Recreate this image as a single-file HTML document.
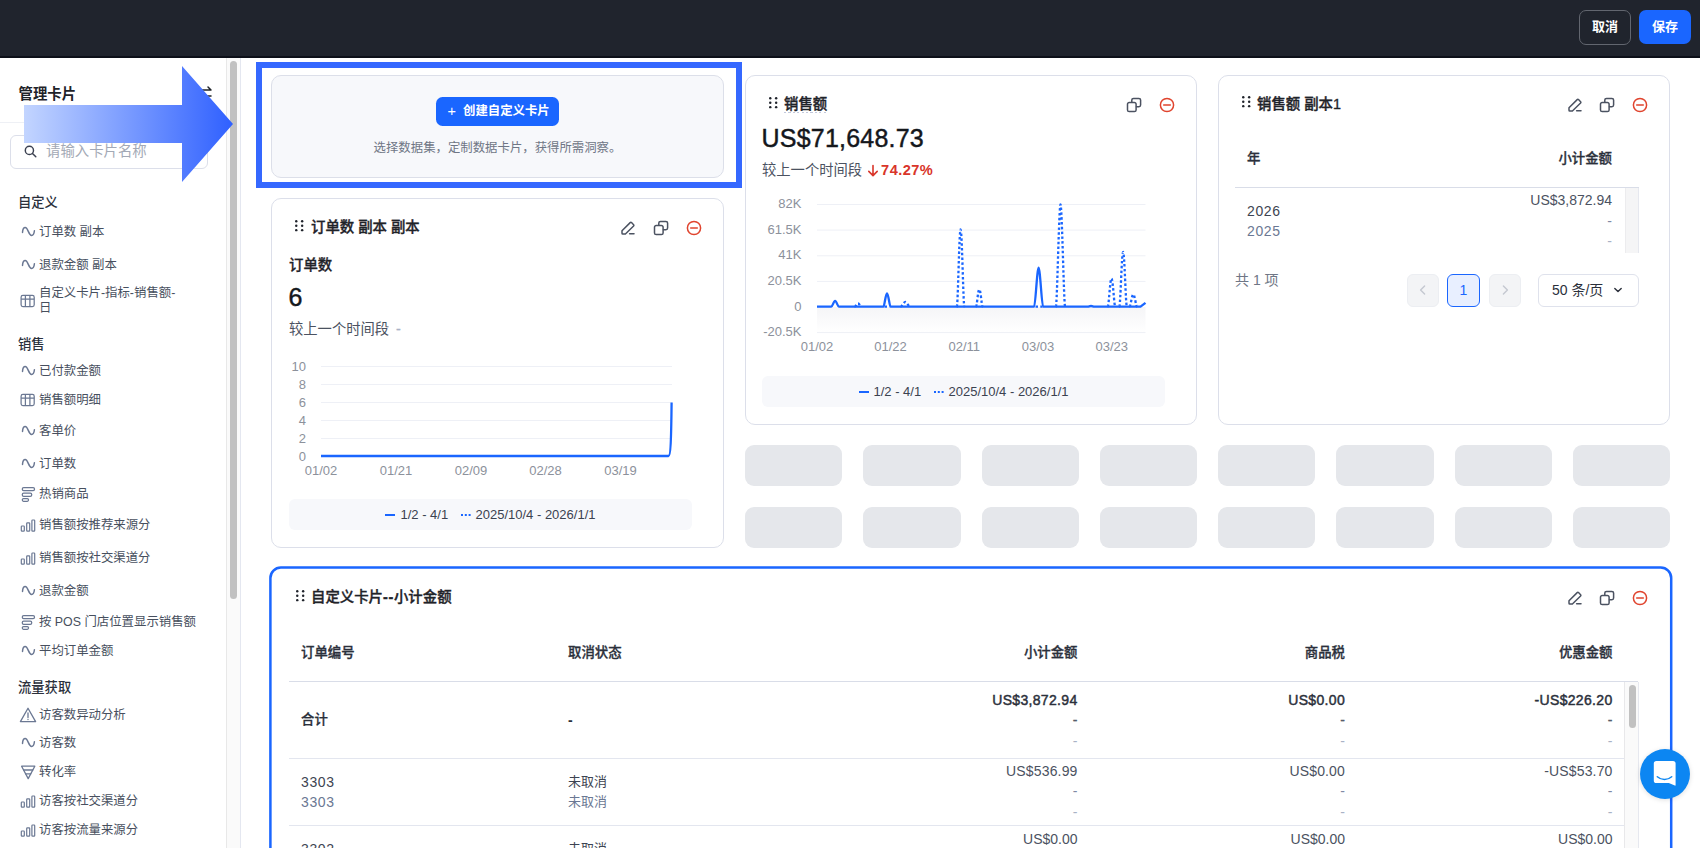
<!DOCTYPE html>
<html lang="zh-CN">
<head>
<meta charset="utf-8">
<title>管理卡片</title>
<style>
*{box-sizing:border-box;margin:0;padding:0}
html,body{width:1700px;height:852px;overflow:hidden;background:#fff}
body{font-family:"Liberation Sans","Noto Sans CJK SC",sans-serif;color:#1f2329;position:relative;font-size:12px}
.abs{position:absolute}
#top{position:absolute;left:0;top:0;width:1700px;height:58px;background:#20242d;border-bottom:2px solid #0d1019;z-index:5}
.btn{position:absolute;top:10px;height:35px;width:52px;border-radius:7px;color:#fff;font-size:13px;font-weight:700;text-align:center;line-height:33px}
#cancel{left:1579px;border:1.5px solid #62666f;line-height:32px}
#save{left:1639px;top:10px;height:34px;background:#1a66ff;line-height:34px}
/* sidebar */
#side{position:absolute;left:0;top:0;width:226px;height:848px;background:#fff}
.t{position:absolute;white-space:nowrap;line-height:16px;height:16px}
.sec{font-size:13.3px;font-weight:500;color:#2b303b;left:18px}
.it{font-size:12.4px;color:#474f5e;left:39px}
.ic{position:absolute;left:19px;width:18px;height:18px}
.ic svg{display:block}
/* cards */
.card{position:absolute;background:#fff;border:1px solid #dcdfea;border-radius:10px}
.ct{position:absolute;font-size:14.4px;font-weight:500;-webkit-text-stroke:0.35px #1f2329;color:#1f2329;white-space:nowrap;line-height:20px}
.g{color:#8a8f99}
.sk{position:absolute;width:97px;height:41px;border-radius:9px;background:#e5e7eb}
.ax{position:absolute;font-size:13px;color:#8c919b;white-space:nowrap;line-height:14px;height:14px}
.r{text-align:right}
.leg{position:absolute;background:#f7f8fb;border-radius:6px;height:31px}
.leg span{position:absolute;top:8px;font-size:13px;line-height:15px;color:#3b4250;white-space:nowrap}
.th{position:absolute;font-size:13.4px;font-weight:500;-webkit-text-stroke:0.3px #2b303b;color:#2b303b;white-space:nowrap;line-height:16px}
.td{position:absolute;font-size:14px;color:#3d4452;white-space:nowrap;line-height:16px}
.td2{position:absolute;font-size:14px;color:#6b7893;white-space:nowrap;line-height:16px}
.hl{position:absolute;height:1px;background:#e3e6ef}
.big{position:absolute;font-size:25px;font-weight:400;color:#14171c;line-height:30px;white-space:nowrap;-webkit-text-stroke:0.45px #14171c}
.num{letter-spacing:0.6px}
</style>
</head>
<body>
<div id="top">
  <div class="btn" id="cancel">取消</div>
  <div class="btn" id="save">保存</div>
</div>
<div id="side">
<div class="t" style="left:18.5px;top:85px;font-size:14.4px;font-weight:700;color:#1f2329;line-height:18px;height:18px">管理卡片</div>
<svg class="abs" style="left:196px;top:84px" width="18" height="18" viewBox="0 0 18 18" fill="none" stroke="#1f2329" stroke-width="1.5" stroke-linecap="round" stroke-linejoin="round"><path d="M3 6h12M12 3l3 3M15 12H3M6 15l-3-3"/></svg>
<div class="hl" style="left:0;top:122px;width:226px;background:#eef0f5"></div>
<div class="abs" style="left:10px;top:135px;width:198px;height:34px;border:1px solid #dcdfea;border-radius:6px"></div>
<svg class="abs" style="left:23px;top:144px" width="16" height="16" viewBox="0 0 16 16" fill="none" stroke="#3b4150" stroke-width="1.45" stroke-linecap="round"><circle cx="6.4" cy="6.4" r="4.1"/><path d="M9.5 9.5L12.8 12.8"/></svg>
<div class="t" style="left:46px;top:142px;font-size:14.4px;color:#a3a9b5;line-height:18px;height:18px">请输入卡片名称</div>
<div class="t sec" style="top:195px">自定义</div>
<div class="ic" style="top:223px"><svg width="18" height="18" viewBox="0 0 18 18" fill="none" stroke="#6b7893" stroke-width="1.5" stroke-linecap="round"><path d="M3.5 9.4C3.8 6 4.8 4.6 6.2 4.6c3 0 3.2 7.8 6.4 7.8 1.5 0 2.5-1.6 2.8-4.6"/></svg></div><div class="t it" style="top:224.4px">订单数 副本</div>
<div class="ic" style="top:255.5px"><svg width="18" height="18" viewBox="0 0 18 18" fill="none" stroke="#6b7893" stroke-width="1.5" stroke-linecap="round"><path d="M3.5 9.4C3.8 6 4.8 4.6 6.2 4.6c3 0 3.2 7.8 6.4 7.8 1.5 0 2.5-1.6 2.8-4.6"/></svg></div><div class="t it" style="top:256.9px">退款金额 副本</div>
<div class="ic" style="top:292px"><svg width="18" height="18" viewBox="0 0 18 18" fill="none" stroke="#6b7893" stroke-width="1.25"><rect x="2.1" y="3.35" width="13.1" height="11.3" rx="1.8"/><path d="M2.1 7.05h13.1M6.4 3.35v11.3M10.9 3.35v11.3"/></svg></div><div class="t it" style="top:286.3px;height:30px;line-height:15px">自定义卡片-指标-销售额-<br>日</div>
<div class="t sec" style="top:337px">销售</div>
<div class="ic" style="top:361.5px"><svg width="18" height="18" viewBox="0 0 18 18" fill="none" stroke="#6b7893" stroke-width="1.5" stroke-linecap="round"><path d="M3.5 9.4C3.8 6 4.8 4.6 6.2 4.6c3 0 3.2 7.8 6.4 7.8 1.5 0 2.5-1.6 2.8-4.6"/></svg></div><div class="t it" style="top:362.9px">已付款金额</div>
<div class="ic" style="top:390.5px"><svg width="18" height="18" viewBox="0 0 18 18" fill="none" stroke="#6b7893" stroke-width="1.25"><rect x="2.1" y="3.35" width="13.1" height="11.3" rx="1.8"/><path d="M2.1 7.05h13.1M6.4 3.35v11.3M10.9 3.35v11.3"/></svg></div><div class="t it" style="top:391.9px">销售额明细</div>
<div class="ic" style="top:422px"><svg width="18" height="18" viewBox="0 0 18 18" fill="none" stroke="#6b7893" stroke-width="1.5" stroke-linecap="round"><path d="M3.5 9.4C3.8 6 4.8 4.6 6.2 4.6c3 0 3.2 7.8 6.4 7.8 1.5 0 2.5-1.6 2.8-4.6"/></svg></div><div class="t it" style="top:423.4px">客单价</div>
<div class="ic" style="top:454.5px"><svg width="18" height="18" viewBox="0 0 18 18" fill="none" stroke="#6b7893" stroke-width="1.5" stroke-linecap="round"><path d="M3.5 9.4C3.8 6 4.8 4.6 6.2 4.6c3 0 3.2 7.8 6.4 7.8 1.5 0 2.5-1.6 2.8-4.6"/></svg></div><div class="t it" style="top:455.9px">订单数</div>
<div class="ic" style="top:485px"><svg width="18" height="18" viewBox="0 0 18 18" fill="none" stroke="#6b7893" stroke-width="1.25"><rect x="3.3" y="2.6" width="12.2" height="3.1" rx="1.4"/><rect x="3.3" y="8.2" width="9.4" height="3.1" rx="1.4"/><rect x="3.3" y="13.6" width="6.2" height="2.7" rx="1.2"/></svg></div><div class="t it" style="top:486.4px">热销商品</div>
<div class="ic" style="top:516px"><svg width="18" height="18" viewBox="0 0 18 18" fill="none" stroke="#6b7893" stroke-width="1.2"><rect x="2.3" y="10" width="3" height="5.2" rx="0.7"/><rect x="7.7" y="6.9" width="3" height="8.3" rx="0.7"/><rect x="12.9" y="4" width="2.8" height="11.2" rx="0.7"/></svg></div><div class="t it" style="top:517.4px">销售额按推荐来源分</div>
<div class="ic" style="top:549px"><svg width="18" height="18" viewBox="0 0 18 18" fill="none" stroke="#6b7893" stroke-width="1.2"><rect x="2.3" y="10" width="3" height="5.2" rx="0.7"/><rect x="7.7" y="6.9" width="3" height="8.3" rx="0.7"/><rect x="12.9" y="4" width="2.8" height="11.2" rx="0.7"/></svg></div><div class="t it" style="top:550.4px">销售额按社交渠道分</div>
<div class="ic" style="top:582px"><svg width="18" height="18" viewBox="0 0 18 18" fill="none" stroke="#6b7893" stroke-width="1.5" stroke-linecap="round"><path d="M3.5 9.4C3.8 6 4.8 4.6 6.2 4.6c3 0 3.2 7.8 6.4 7.8 1.5 0 2.5-1.6 2.8-4.6"/></svg></div><div class="t it" style="top:583.4px">退款金额</div>
<div class="ic" style="top:613px"><svg width="18" height="18" viewBox="0 0 18 18" fill="none" stroke="#6b7893" stroke-width="1.25"><rect x="3.3" y="2.6" width="12.2" height="3.1" rx="1.4"/><rect x="3.3" y="8.2" width="9.4" height="3.1" rx="1.4"/><rect x="3.3" y="13.6" width="6.2" height="2.7" rx="1.2"/></svg></div><div class="t it" style="top:614.4px">按 POS 门店位置显示销售额</div>
<div class="ic" style="top:641.5px"><svg width="18" height="18" viewBox="0 0 18 18" fill="none" stroke="#6b7893" stroke-width="1.5" stroke-linecap="round"><path d="M3.5 9.4C3.8 6 4.8 4.6 6.2 4.6c3 0 3.2 7.8 6.4 7.8 1.5 0 2.5-1.6 2.8-4.6"/></svg></div><div class="t it" style="top:642.9px">平均订单金额</div>
<div class="t sec" style="top:680px">流量获取</div>
<div class="ic" style="top:705.5px"><svg width="18" height="18" viewBox="0 0 18 18" fill="none" stroke="#6b7893" stroke-width="1.3" stroke-linejoin="round" stroke-linecap="round"><path d="M9 2.2L16.6 15.6H1.4Z"/><path d="M9 7v4.6M9 13.4v.2"/></svg></div><div class="t it" style="top:706.9px">访客数异动分析</div>
<div class="ic" style="top:734px"><svg width="18" height="18" viewBox="0 0 18 18" fill="none" stroke="#6b7893" stroke-width="1.5" stroke-linecap="round"><path d="M3.5 9.4C3.8 6 4.8 4.6 6.2 4.6c3 0 3.2 7.8 6.4 7.8 1.5 0 2.5-1.6 2.8-4.6"/></svg></div><div class="t it" style="top:735.4px">访客数</div>
<div class="ic" style="top:763px"><svg width="18" height="18" viewBox="0 0 18 18" fill="none" stroke="#6b7893" stroke-width="1.3" stroke-linejoin="round" stroke-linecap="round"><path d="M2.6 3.2h13.2L9.2 15.6Z"/><path d="M4.6 7h9.2M6.6 10.8h5.2"/></svg></div><div class="t it" style="top:764.4px">转化率</div>
<div class="ic" style="top:792px"><svg width="18" height="18" viewBox="0 0 18 18" fill="none" stroke="#6b7893" stroke-width="1.2"><rect x="2.3" y="10" width="3" height="5.2" rx="0.7"/><rect x="7.7" y="6.9" width="3" height="8.3" rx="0.7"/><rect x="12.9" y="4" width="2.8" height="11.2" rx="0.7"/></svg></div><div class="t it" style="top:793.4px">访客按社交渠道分</div>
<div class="ic" style="top:821px"><svg width="18" height="18" viewBox="0 0 18 18" fill="none" stroke="#6b7893" stroke-width="1.2"><rect x="2.3" y="10" width="3" height="5.2" rx="0.7"/><rect x="7.7" y="6.9" width="3" height="8.3" rx="0.7"/><rect x="12.9" y="4" width="2.8" height="11.2" rx="0.7"/></svg></div><div class="t it" style="top:822.4px">访客按流量来源分</div>
</div>
<!-- sidebar scrollbar -->
<div class="abs" style="left:226px;top:57px;width:15px;height:791px;background:#fafafa;border-left:1px solid #e8e8e8;border-right:1px solid #e4e7f0"></div>
<div class="abs" style="left:230px;top:61px;width:7px;height:538px;border-radius:4px;background:#c1c1c1"></div>
<!-- arrow annotation -->
<svg class="abs" style="left:20px;top:60px;z-index:4" width="220" height="130" viewBox="20 60 220 130">
<defs><linearGradient id="ag" x1="24" y1="0" x2="233" y2="0" gradientUnits="userSpaceOnUse"><stop offset="0" stop-color="#c3d5ff"/><stop offset="1" stop-color="#2f60ff"/></linearGradient></defs>
<path d="M24 105H182V66L233 124L182 182V143H24Z" fill="url(#ag)"/>
</svg>
<div id="main">
<!-- create card -->
<div class="card" style="left:271px;top:75px;width:453px;height:103px;background:#f7f8fb;border-color:#dcdfe9"></div>
<div class="abs" style="left:436px;top:97px;width:123px;height:29px;border-radius:6.5px;background:#1a66ff"></div>
<div class="abs" style="left:447.5px;top:101px;width:10px;color:#fff;font-size:14.5px;line-height:20px;white-space:nowrap">+</div>
<div class="abs" style="left:463px;top:101px;color:#fff;font-size:12.4px;font-weight:700;line-height:20px;white-space:nowrap">创建自定义卡片</div>
<div class="t" style="left:271px;width:453px;top:139.5px;text-align:center;font-size:12.4px;color:#6f7685">选择数据集，定制数据卡片，获得所需洞察。</div>
<!-- highlight -->
<div class="abs" style="left:256px;top:62px;width:486px;height:126px;border:6px solid #3568ff"></div>

<!-- card: 订单数 副本 副本 -->
<div class="card" style="left:271px;top:198px;width:453px;height:350px"></div>
<!-- card: 销售额 -->
<div class="card" style="left:745px;top:75px;width:452px;height:350px"></div>
<!-- card: 销售额 副本1 -->
<div class="card" style="left:1218px;top:75px;width:452px;height:350px"></div>
<!-- bottom card -->
<svg class="abs" style="left:265px;top:562px" width="1412" height="290" viewBox="265 562 1412 290"><rect x="270.4" y="567.5" width="1400.8" height="320" rx="10.5" fill="#fff" stroke="#1a66ff" stroke-width="2.5"/></svg>
<!-- skeletons -->
<div class="sk" style="left:745.00px;top:445px;width:97.25px"></div>
<div class="sk" style="left:863.25px;top:445px;width:97.25px"></div>
<div class="sk" style="left:981.50px;top:445px;width:97.25px"></div>
<div class="sk" style="left:1099.75px;top:445px;width:97.25px"></div>
<div class="sk" style="left:1218.00px;top:445px;width:97.25px"></div>
<div class="sk" style="left:1336.25px;top:445px;width:97.25px"></div>
<div class="sk" style="left:1454.50px;top:445px;width:97.25px"></div>
<div class="sk" style="left:1572.75px;top:445px;width:97.25px"></div>
<div class="sk" style="left:745.00px;top:507px;width:97.25px"></div>
<div class="sk" style="left:863.25px;top:507px;width:97.25px"></div>
<div class="sk" style="left:981.50px;top:507px;width:97.25px"></div>
<div class="sk" style="left:1099.75px;top:507px;width:97.25px"></div>
<div class="sk" style="left:1218.00px;top:507px;width:97.25px"></div>
<div class="sk" style="left:1336.25px;top:507px;width:97.25px"></div>
<div class="sk" style="left:1454.50px;top:507px;width:97.25px"></div>
<div class="sk" style="left:1572.75px;top:507px;width:97.25px"></div>
<!-- card 2 content -->
<svg class="abs" style="left:295.4px;top:220.2px" width="9" height="12" viewBox="0 0 9 12" fill="#1f232b"><circle cx="1.25" cy="1.25" r="1.22"/><circle cx="7.15" cy="1.25" r="1.22"/><circle cx="1.25" cy="5.70" r="1.22"/><circle cx="7.15" cy="5.70" r="1.22"/><circle cx="1.25" cy="10.15" r="1.22"/><circle cx="7.15" cy="10.15" r="1.22"/></svg>
<div class="ct" style="left:311px;top:217px">订单数 副本 副本</div>
<svg class="abs" style="left:619px;top:219px" width="18" height="18" viewBox="-9 -9 18 18" fill="none" stroke="#4b5261" stroke-width="1.5" stroke-linecap="round" stroke-linejoin="round"><path d="M2.2 -5.4a0.9 0.9 0 0 1 1.3 0L5.6 -3.3a0.9 0.9 0 0 1 0 1.3L-2.6 6H-5.2a0.8 0.8 0 0 1 -0.8 -0.8V2.8Z"/><path d="M1.6 5.8H6"/></svg>
<svg class="abs" style="left:651.5px;top:219px" width="18" height="18" viewBox="-9 -9 18 18" fill="none" stroke="#4b5261" stroke-width="1.5" stroke-linecap="round" stroke-linejoin="round"><rect x="-6.5" y="-2.4" width="8.6" height="9" rx="1.7"/><path d="M-2.2 -2.8V-4.9a1.7 1.7 0 0 1 1.7 -1.7h5.4a1.7 1.7 0 0 1 1.7 1.7v5a1.7 1.7 0 0 1 -1.7 1.7H2.5"/></svg>
<svg class="abs" style="left:684.5px;top:219px" width="18" height="18" viewBox="-9 -9 18 18" fill="none" stroke="#e0442e" stroke-width="1.5" stroke-linecap="round" stroke-linejoin="round"><circle cx="0" cy="0" r="6.6"/><path d="M-3.3 0h6.6"/></svg>
<div class="abs" style="left:289px;top:255px;font-size:14.4px;font-weight:500;-webkit-text-stroke:0.3px #1f2329;color:#1f2329;line-height:20px;white-space:nowrap">订单数</div>
<div class="big" style="left:288.5px;top:282px">6</div>
<div class="abs" style="left:289px;top:319px;font-size:14.3px;color:#4b5261;line-height:20px;white-space:nowrap">较上一个时间段 <span style="color:#a9b2c6;margin-left:3px;-webkit-text-stroke:0.3px #a9b2c6">-</span></div>
<svg class="abs" style="left:280px;top:355px" width="420" height="130" viewBox="280 355 420 130"><path d="M321 366.5H672" stroke="#eef0f6" stroke-width="1"/><path d="M321 384.5H672" stroke="#eef0f6" stroke-width="1"/><path d="M321 402.5H672" stroke="#eef0f6" stroke-width="1"/><path d="M321 420.5H672" stroke="#eef0f6" stroke-width="1"/><path d="M321 438.5H672" stroke="#eef0f6" stroke-width="1"/><path d="M321 456H668.5C670.5 456 671.2 440 671.6 402.5" fill="none" stroke="#1a66ff" stroke-width="2.3" stroke-linejoin="round"/><text x="306" y="370.6" text-anchor="end" font-size="13" fill="#8c919b">10</text><text x="306" y="388.6" text-anchor="end" font-size="13" fill="#8c919b">8</text><text x="306" y="406.6" text-anchor="end" font-size="13" fill="#8c919b">6</text><text x="306" y="424.6" text-anchor="end" font-size="13" fill="#8c919b">4</text><text x="306" y="442.6" text-anchor="end" font-size="13" fill="#8c919b">2</text><text x="306" y="460.6" text-anchor="end" font-size="13" fill="#8c919b">0</text><text x="321" y="475" text-anchor="middle" font-size="13" fill="#8c919b">01/02</text><text x="396" y="475" text-anchor="middle" font-size="13" fill="#8c919b">01/21</text><text x="471" y="475" text-anchor="middle" font-size="13" fill="#8c919b">02/09</text><text x="545.5" y="475" text-anchor="middle" font-size="13" fill="#8c919b">02/28</text><text x="620.5" y="475" text-anchor="middle" font-size="13" fill="#8c919b">03/19</text></svg>
<div class="leg" style="left:289px;top:498.5px;width:403px"><i class="abs" style="left:96px;top:15.5px;width:10px;height:2px;background:#1a66ff"></i><span style="left:111.5px">1/2 - 4/1</span><i class="abs" style="left:172px;top:15.5px;width:2.4px;height:2px;background:#1a66ff;box-shadow:3.8px 0 0 #1a66ff,7.6px 0 0 #1a66ff"></i><span style="left:186.5px">2025/10/4 - 2026/1/1</span></div>
<!-- card 3 content -->
<svg class="abs" style="left:768.8px;top:96.7px" width="9" height="12" viewBox="0 0 9 12" fill="#1f232b"><circle cx="1.25" cy="1.25" r="1.22"/><circle cx="7.15" cy="1.25" r="1.22"/><circle cx="1.25" cy="5.70" r="1.22"/><circle cx="7.15" cy="5.70" r="1.22"/><circle cx="1.25" cy="10.15" r="1.22"/><circle cx="7.15" cy="10.15" r="1.22"/></svg>
<div class="ct" style="left:784px;top:94px;line-height:17px;top:95.5px;padding-bottom:0;background:repeating-linear-gradient(90deg,#c3c9dc 0 2.2px,transparent 2.2px 4.4px) left 16.4px/100% 1px no-repeat;height:18px">销售额</div>
<svg class="abs" style="left:1125px;top:95.5px" width="18" height="18" viewBox="-9 -9 18 18" fill="none" stroke="#4b5261" stroke-width="1.5" stroke-linecap="round" stroke-linejoin="round"><rect x="-6.5" y="-2.4" width="8.6" height="9" rx="1.7"/><path d="M-2.2 -2.8V-4.9a1.7 1.7 0 0 1 1.7 -1.7h5.4a1.7 1.7 0 0 1 1.7 1.7v5a1.7 1.7 0 0 1 -1.7 1.7H2.5"/></svg>
<svg class="abs" style="left:1158px;top:95.5px" width="18" height="18" viewBox="-9 -9 18 18" fill="none" stroke="#e0442e" stroke-width="1.5" stroke-linecap="round" stroke-linejoin="round"><circle cx="0" cy="0" r="6.6"/><path d="M-3.3 0h6.6"/></svg>
<div class="big" style="left:761.5px;top:123px;letter-spacing:0.22px">US$71,648.73</div>
<div class="abs" style="left:762px;top:160px;font-size:14.3px;color:#4b5261;line-height:20px;white-space:nowrap">较上一个时间段<span style="color:#d9352a;font-weight:700;margin-left:5px;font-size:14.6px;letter-spacing:0.45px"><svg width="12" height="13" viewBox="0 0 12 13" style="vertical-align:-1.5px;margin-right:2px" fill="none" stroke="#d9352a" stroke-width="1.6" stroke-linecap="round" stroke-linejoin="round"><path d="M6 1.5v10M1.8 7.4L6 11.6l4.2-4.2"/></svg>74.27%</span></div>
<svg class="abs" style="left:755px;top:190px" width="420" height="170" viewBox="755 190 420 170"><defs><linearGradient id="ng" x1="0" y1="307" x2="0" y2="333" gradientUnits="userSpaceOnUse"><stop offset="0" stop-color="#f5f5f7"/><stop offset="1" stop-color="#ffffff"/></linearGradient></defs><rect x="817" y="307" width="328.5" height="26" fill="url(#ng)"/><path d="M817 204.5H1145.5" stroke="#eef0f6" stroke-width="1"/><path d="M817 230.1H1145.5" stroke="#eef0f6" stroke-width="1"/><path d="M817 255.8H1145.5" stroke="#eef0f6" stroke-width="1"/><path d="M817 281.4H1145.5" stroke="#eef0f6" stroke-width="1"/><path d="M817 332.6H1145.5" stroke="#eef0f6" stroke-width="1"/><path d="M854.6 306.7C855.8 306.7 856.5 303.5 858.0 303.5C859.5 303.5 860.2 306.7 861.4 306.7M900.6 306.7C901.8 306.7 903.8 302 905.3 302C906.8 302 908.8 306.7 910.0 306.7M956.8 306.7C958.0 306.7 959.1 229.5 960.6 229.5C962.1 229.5 963.2 306.7 964.4 306.7M975.9 306.7C977.1 306.7 977.8 289.5 979.3 289.5C980.8 289.5 981.5 306.7 982.7 306.7M1055.9 306.7C1057.1 306.7 1059.0 204.5 1060.5 204.5C1062.0 204.5 1063.9 306.7 1065.1 306.7M1107.7 306.7C1108.9 306.7 1110.0 278.5 1111.5 278.5C1113.0 278.5 1114.1 306.7 1115.3 306.7M1119.3 306.7C1120.5 306.7 1121.6 252 1123.1 252C1124.6 252 1125.7 306.7 1126.9 306.7M1129.5 306.7C1130.7 306.7 1131.8 294.5 1133.3 294.5C1134.8 294.5 1135.9 306.7 1137.1 306.7M1035.5 306.7H1042.5M884.5 306.7H889.5" fill="none" stroke="#1a66ff" stroke-width="2.3" stroke-dasharray="2.5 2.3"/><path d="M817 306.7L831.3 306.7C832.5 306.7 833.6 301 835.1 301C836.6 301 837.7 306.7 838.9 306.7L883.4 306.7C884.6 306.7 885.5 293.3 887.0 293.3C888.5 293.3 889.4 306.7 890.6 306.7L1034.2 306.7C1035.4 306.7 1037.1 267.6 1038.6 267.6C1040.1 267.6 1041.8 306.7 1043.0 306.7L1087.8 306.7C1089.0 306.7 1089.5 306 1091.0 306C1092.5 306 1093.0 306.7 1094.2 306.7L1140.5 306.7L1145.5 302.8" fill="none" stroke="#1a66ff" stroke-width="2.3" stroke-linejoin="round"/><text x="801.5" y="208.1" text-anchor="end" font-size="13" fill="#8c919b">82K</text><text x="801.5" y="233.7" text-anchor="end" font-size="13" fill="#8c919b">61.5K</text><text x="801.5" y="259.4" text-anchor="end" font-size="13" fill="#8c919b">41K</text><text x="801.5" y="285.0" text-anchor="end" font-size="13" fill="#8c919b">20.5K</text><text x="801.5" y="310.6" text-anchor="end" font-size="13" fill="#8c919b">0</text><text x="801.5" y="336.2" text-anchor="end" font-size="13" fill="#8c919b">-20.5K</text><text x="817" y="351.4" text-anchor="middle" font-size="13" fill="#8c919b">01/02</text><text x="890.5" y="351.4" text-anchor="middle" font-size="13" fill="#8c919b">01/22</text><text x="964.3" y="351.4" text-anchor="middle" font-size="13" fill="#8c919b">02/11</text><text x="1038" y="351.4" text-anchor="middle" font-size="13" fill="#8c919b">03/03</text><text x="1111.7" y="351.4" text-anchor="middle" font-size="13" fill="#8c919b">03/23</text></svg>
<div class="leg" style="left:762px;top:375.5px;width:403px"><i class="abs" style="left:96.5px;top:15.5px;width:10px;height:2px;background:#1a66ff"></i><span style="left:111.5px">1/2 - 4/1</span><i class="abs" style="left:172px;top:15.5px;width:2.4px;height:2px;background:#1a66ff;box-shadow:3.8px 0 0 #1a66ff,7.6px 0 0 #1a66ff"></i><span style="left:186.5px">2025/10/4 - 2026/1/1</span></div>
<!-- card 4 content -->
<svg class="abs" style="left:1241.8px;top:96.2px" width="9" height="12" viewBox="0 0 9 12" fill="#1f232b"><circle cx="1.25" cy="1.25" r="1.22"/><circle cx="7.15" cy="1.25" r="1.22"/><circle cx="1.25" cy="5.70" r="1.22"/><circle cx="7.15" cy="5.70" r="1.22"/><circle cx="1.25" cy="10.15" r="1.22"/><circle cx="7.15" cy="10.15" r="1.22"/></svg>
<div class="ct" style="left:1257px;top:93.5px">销售额 副本1</div>
<svg class="abs" style="left:1565.5px;top:95.5px" width="18" height="18" viewBox="-9 -9 18 18" fill="none" stroke="#4b5261" stroke-width="1.5" stroke-linecap="round" stroke-linejoin="round"><path d="M2.2 -5.4a0.9 0.9 0 0 1 1.3 0L5.6 -3.3a0.9 0.9 0 0 1 0 1.3L-2.6 6H-5.2a0.8 0.8 0 0 1 -0.8 -0.8V2.8Z"/><path d="M1.6 5.8H6"/></svg>
<svg class="abs" style="left:1598.3px;top:95.5px" width="18" height="18" viewBox="-9 -9 18 18" fill="none" stroke="#4b5261" stroke-width="1.5" stroke-linecap="round" stroke-linejoin="round"><rect x="-6.5" y="-2.4" width="8.6" height="9" rx="1.7"/><path d="M-2.2 -2.8V-4.9a1.7 1.7 0 0 1 1.7 -1.7h5.4a1.7 1.7 0 0 1 1.7 1.7v5a1.7 1.7 0 0 1 -1.7 1.7H2.5"/></svg>
<svg class="abs" style="left:1631px;top:95.5px" width="18" height="18" viewBox="-9 -9 18 18" fill="none" stroke="#e0442e" stroke-width="1.5" stroke-linecap="round" stroke-linejoin="round"><circle cx="0" cy="0" r="6.6"/><path d="M-3.3 0h6.6"/></svg>
<div class="th" style="left:1247px;top:151px">年</div>
<div class="th r" style="left:1412px;width:200px;top:151px">小计金额</div>
<div class="hl" style="left:1235px;top:187px;width:404px;background:#d9dde8"></div>
<div class="abs" style="left:1625px;top:188px;width:14px;height:65px;background:#f5f5f6;border-left:1px solid #ececee;border-right:1px solid #e6e8ef"></div>
<div class="td num" style="left:1247px;top:202.5px;font-weight:500">2026</div>
<div class="td2 num" style="left:1247px;top:223px">2025</div>
<div class="td r" style="left:1412px;width:200px;top:192px;color:#4b5261">US$3,872.94</div>
<div class="td r" style="left:1412px;width:200px;top:212.5px;color:#7f8aa5">-</div>
<div class="td r" style="left:1412px;width:200px;top:233px;color:#a9b2c6">-</div>
<div class="abs" style="left:1235px;top:270px;font-size:14px;color:#6f7685;line-height:20px;white-space:nowrap">共 1 项</div>
<div class="abs" style="left:1406.5px;top:274px;width:32.5px;height:32.5px;border-radius:6px;background:#f3f4f6;border:1px solid #eceef2"></div>
<svg class="abs" style="left:1416px;top:283px" width="14" height="14" viewBox="0 0 14 14" fill="none" stroke="#c4c8d0" stroke-width="1.4" stroke-linecap="round" stroke-linejoin="round"><path d="M8.6 3L4.6 7l4 4"/></svg>
<div class="abs" style="left:1447px;top:274px;width:33px;height:32.5px;border-radius:6px;background:#e8efff;border:1.5px solid #1a66ff;color:#1a66ff;font-size:14px;text-align:center;line-height:30px">1</div>
<div class="abs" style="left:1488.5px;top:274px;width:32.5px;height:32.5px;border-radius:6px;background:#f3f4f6;border:1px solid #eceef2"></div>
<svg class="abs" style="left:1498px;top:283px" width="14" height="14" viewBox="0 0 14 14" fill="none" stroke="#c4c8d0" stroke-width="1.4" stroke-linecap="round" stroke-linejoin="round"><path d="M5.4 3l4 4-4 4"/></svg>
<div class="abs" style="left:1538px;top:274px;width:100.5px;height:32.5px;border-radius:6px;background:#fff;border:1px solid #dfe2ec;font-size:14px;color:#2b303b;line-height:31px;padding-left:13px;white-space:nowrap">50 条/页</div>
<svg class="abs" style="left:1612px;top:284px" width="12" height="12" viewBox="0 0 12 12" fill="none" stroke="#2b303b" stroke-width="1.4" stroke-linecap="round" stroke-linejoin="round"><path d="M2.8 4.4L6 7.6l3.2-3.2"/></svg>
<!-- bottom card content -->
<svg class="abs" style="left:295.6px;top:589.9px" width="9" height="12" viewBox="0 0 9 12" fill="#1f232b"><circle cx="1.25" cy="1.25" r="1.22"/><circle cx="7.15" cy="1.25" r="1.22"/><circle cx="1.25" cy="5.70" r="1.22"/><circle cx="7.15" cy="5.70" r="1.22"/><circle cx="1.25" cy="10.15" r="1.22"/><circle cx="7.15" cy="10.15" r="1.22"/></svg>
<div class="ct" style="left:311px;top:587px">自定义卡片<span style="letter-spacing:0.7px;font-weight:700">--</span>小计金额</div>
<svg class="abs" style="left:1565.7px;top:589px" width="18" height="18" viewBox="-9 -9 18 18" fill="none" stroke="#4b5261" stroke-width="1.5" stroke-linecap="round" stroke-linejoin="round"><path d="M2.2 -5.4a0.9 0.9 0 0 1 1.3 0L5.6 -3.3a0.9 0.9 0 0 1 0 1.3L-2.6 6H-5.2a0.8 0.8 0 0 1 -0.8 -0.8V2.8Z"/><path d="M1.6 5.8H6"/></svg>
<svg class="abs" style="left:1598.3px;top:589px" width="18" height="18" viewBox="-9 -9 18 18" fill="none" stroke="#4b5261" stroke-width="1.5" stroke-linecap="round" stroke-linejoin="round"><rect x="-6.5" y="-2.4" width="8.6" height="9" rx="1.7"/><path d="M-2.2 -2.8V-4.9a1.7 1.7 0 0 1 1.7 -1.7h5.4a1.7 1.7 0 0 1 1.7 1.7v5a1.7 1.7 0 0 1 -1.7 1.7H2.5"/></svg>
<svg class="abs" style="left:1631px;top:589px" width="18" height="18" viewBox="-9 -9 18 18" fill="none" stroke="#e0442e" stroke-width="1.5" stroke-linecap="round" stroke-linejoin="round"><circle cx="0" cy="0" r="6.6"/><path d="M-3.3 0h6.6"/></svg>
<div class="th" style="left:301px;top:644.5px">订单编号</div>
<div class="th" style="left:568px;top:644.5px">取消状态</div>
<div class="th r" style="left:877.5px;width:200px;top:644.5px">小计金额</div>
<div class="th r" style="left:1145px;width:200px;top:644.5px">商品税</div>
<div class="th r" style="left:1412.5px;width:200px;top:644.5px">优惠金额</div>
<div class="hl" style="left:289px;top:681px;width:1349px;background:#d9dde8"></div>
<div class="abs" style="left:1624px;top:682px;width:14.5px;height:170px;background:#fafafa;border-left:1px solid #e8e8ea;border-right:1px solid #e6e8ef"></div>
<div class="abs" style="left:1629px;top:685px;width:7px;height:43px;border-radius:4px;background:#c1c1c1"></div>
<div class="td" style="left:301px;top:712px;font-size:13.4px;font-weight:500;-webkit-text-stroke:0.25px #2b303b;color:#2b303b">合计</div>
<div class="td" style="left:568px;top:712px;font-weight:700;color:#2b303b">-</div>
<div class="td r" style="left:877.5px;width:200px;top:692px;color:#2b303b;-webkit-text-stroke:0.45px #2b303b;letter-spacing:0.32px">US$3,872.94</div><div class="td r" style="left:877.5px;width:200px;top:712px;color:#555c6a;-webkit-text-stroke:0.3px #555c6a">-</div><div class="td r" style="left:877.5px;width:200px;top:732.5px;color:#a9b2c6">-</div>
<div class="td r" style="left:1145px;width:200px;top:692px;color:#2b303b;-webkit-text-stroke:0.45px #2b303b;letter-spacing:0.32px">US$0.00</div><div class="td r" style="left:1145px;width:200px;top:712px;color:#555c6a;-webkit-text-stroke:0.3px #555c6a">-</div><div class="td r" style="left:1145px;width:200px;top:732.5px;color:#a9b2c6">-</div>
<div class="td r" style="left:1412.5px;width:200px;top:692px;color:#2b303b;-webkit-text-stroke:0.45px #2b303b;letter-spacing:0.32px">-US$226.20</div><div class="td r" style="left:1412.5px;width:200px;top:712px;color:#555c6a;-webkit-text-stroke:0.3px #555c6a">-</div><div class="td r" style="left:1412.5px;width:200px;top:732.5px;color:#a9b2c6">-</div>
<div class="hl" style="left:289px;top:758px;width:1335px"></div>
<div class="td num" style="left:301px;top:773.5px;font-weight:500">3303</div>
<div class="td2 num" style="left:301px;top:794px">3303</div>
<div class="td" style="left:568px;top:773.5px;font-size:13px">未取消</div>
<div class="td2" style="left:568px;top:794px;font-size:13px">未取消</div>
<div class="td r" style="left:877.5px;width:200px;top:763px;color:#4b5261;letter-spacing:0.15px">US$536.99</div><div class="td r" style="left:877.5px;width:200px;top:783px;color:#7f8aa5">-</div><div class="td r" style="left:877.5px;width:200px;top:803.5px;color:#a9b2c6">-</div>
<div class="td r" style="left:1145px;width:200px;top:763px;color:#4b5261;letter-spacing:0.15px">US$0.00</div><div class="td r" style="left:1145px;width:200px;top:783px;color:#7f8aa5">-</div><div class="td r" style="left:1145px;width:200px;top:803.5px;color:#a9b2c6">-</div>
<div class="td r" style="left:1412.5px;width:200px;top:763px;color:#4b5261;letter-spacing:0.15px">-US$53.70</div><div class="td r" style="left:1412.5px;width:200px;top:783px;color:#7f8aa5">-</div><div class="td r" style="left:1412.5px;width:200px;top:803.5px;color:#a9b2c6">-</div>
<div class="hl" style="left:289px;top:825px;width:1335px"></div>
<div class="td num" style="left:301px;top:840.5px;font-weight:500">3302</div>
<div class="td" style="left:568px;top:840.5px;font-size:13px">未取消</div>
<div class="td r" style="left:877.5px;width:200px;top:830.5px;color:#4b5261">US$0.00</div>
<div class="td r" style="left:1145px;width:200px;top:830.5px;color:#4b5261">US$0.00</div>
<div class="td r" style="left:1412.5px;width:200px;top:830.5px;color:#4b5261">US$0.00</div>
<div class="abs" style="left:1640px;top:748.6px;width:50.2px;height:50.2px;border-radius:50%;background:#0c86f2;box-shadow:0 1px 5px rgba(0,0,0,.13);z-index:8"></div>
<svg class="abs" style="left:1650px;top:758px;z-index:8" width="30" height="30" viewBox="1650 758 30 30"><path d="M1656.4 761h16.6a2.6 2.6 0 0 1 2.6 2.6v21.6c0 .4-.4.6-.8.4l-6-2.5h-12.4a2.6 2.6 0 0 1 -2.6 -2.6v-16.9a2.6 2.6 0 0 1 2.6 -2.6Z" fill="#fff"/><path d="M1657.3 776.8c4.2 3.6 10.2 3.6 14.4 0" fill="none" stroke="#0c86f2" stroke-width="1.5" stroke-linecap="round"/></svg>
</div>
<!-- bottom white strip -->
<div class="abs" style="left:0;top:848px;width:1700px;height:4px;background:#fff;z-index:9"></div>
</body>
</html>
